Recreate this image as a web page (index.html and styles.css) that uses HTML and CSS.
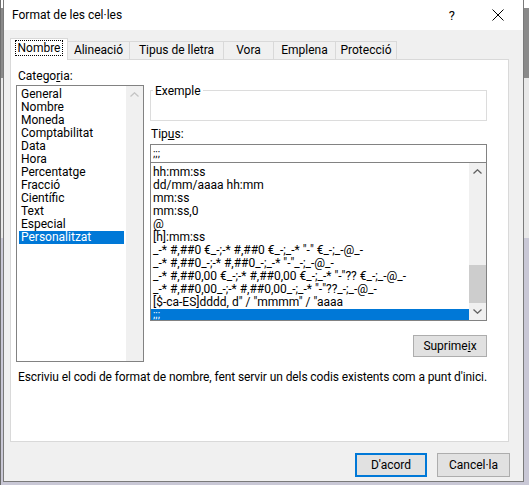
FILE: index.html
```html
<!DOCTYPE html>
<html lang="ca">
<head>
    <meta charset="UTF-8">
    <meta name="viewport" content="width=device-width, initial-scale=1.0">
    <title>Format de les cel·les</title>
    <link rel="stylesheet" href="styles.css">
</head>
<body>
    <div class="dialog">
        <div class="titlebar">
            <span class="title">Format de les cel·les</span>
            <span class="help">?</span>
            <svg class="close" width="12" height="12" viewBox="0 0 12 12">
                <path d="M0.5 0.5 L11.5 11.5 M11.5 0.5 L0.5 11.5" stroke="#000" stroke-width="1" fill="none"/>
            </svg>
        </div>

        <div class="tabs">
            <div class="tab active"><span class="focus">Nombre</span></div>
            <div class="tab">Alineació</div>
            <div class="tab">Tipus de lletra</div>
            <div class="tab">Vora</div>
            <div class="tab">Emplena</div>
            <div class="tab">Protecció</div>
        </div>

        <div class="panel">
            <div class="columns">
                <div class="left">
                    <div class="label">Catego<u>r</u>ia:</div>
                    <div class="listbox cats">
                        <ul>
                            <li>General</li>
                            <li>Nombre</li>
                            <li>Moneda</li>
                            <li>Comptabilitat</li>
                            <li>Data</li>
                            <li>Hora</li>
                            <li>Percentatge</li>
                            <li>Fracció</li>
                            <li>Científic</li>
                            <li>Text</li>
                            <li>Especial</li>
                            <li class="sel">Personalitzat</li>
                        </ul>
                        <div class="scrollbar">
                            <div class="sb-btn">
                                <svg width="9" height="5" viewBox="0 0 9 5"><path d="M0.5 4.5 L4.5 0.8 L8.5 4.5" stroke="#c4c4c4" stroke-width="1.3" fill="none"/></svg>
                            </div>
                        </div>
                    </div>
                </div>

                <div class="right">
                    <div class="sample">
                        <span class="legend">Exemple</span>
                    </div>

                    <div class="label type-label">Tip<u>u</u>s:</div>
                    <div class="typebox">;;;</div>
                    <div class="listbox codes">
                        <ul>
                            <li>hh:mm:ss</li>
                            <li>dd/mm/aaaa hh:mm</li>
                            <li>mm:ss</li>
                            <li>mm:ss,0</li>
                            <li>@</li>
                            <li>[h]:mm:ss</li>
                            <li>_-* #,##0 €_-;-* #,##0 €_-;_-* "-" €_-;_-@_-</li>
                            <li>_-* #,##0_-;-* #,##0_-;_-* "-"_-;_-@_-</li>
                            <li>_-* #,##0,00 €_-;-* #,##0,00 €_-;_-* "-"?? €_-;_-@_-</li>
                            <li>_-* #,##0,00_-;-* #,##0,00_-;_-* "-"??_-;_-@_-</li>
                            <li>[$-ca-ES]dddd, d" / "mmmm" / "aaaa</li>
                            <li class="sel">;;;</li>
                        </ul>
                        <div class="scrollbar">
                            <div class="sb-btn">
                                <svg width="9" height="5" viewBox="0 0 9 5"><path d="M0.5 4.5 L4.5 0.8 L8.5 4.5" stroke="#606060" stroke-width="1.3" fill="none"/></svg>
                            </div>
                            <div class="track"><div class="thumb"></div></div>
                            <div class="sb-btn">
                                <svg width="9" height="5" viewBox="0 0 9 5"><path d="M0.5 0.5 L4.5 4.2 L8.5 0.5" stroke="#606060" stroke-width="1.3" fill="none"/></svg>
                            </div>
                        </div>
                    </div>

                    <div class="delete-row">
                        <button class="btn">Suprime<u>i</u>x</button>
                    </div>
                </div>
            </div>

            <p class="hint">Escriviu el codi de format de nombre, fent servir un dels codis existents com a punt d'inici.</p>
        </div>

        <div class="actions">
            <button class="btn default">D'acord</button>
            <button class="btn">Cancel·la</button>
        </div>
    </div>
</body>
</html>
```

FILE: styles.css
```css
body {
    margin: 0;
    padding: 0;
    font-family: Roboto, "Noto Sans", sans-serif;
    font-size: 12px;
    color: #000;
    /* excel sheet peeking out behind the dialog */
    background:
        linear-gradient(to right, #6d6d6d 0, #6d6d6d 1px, transparent 1px),
        linear-gradient(to bottom, #ffffff 0, #ffffff 8px, #8a8a8a 8px, #8a8a8a 78px, #e8e8e8 78px, #e8e8e8 238px, #c9c8d6 238px);
    height: 485px;
    overflow: hidden;
}

.dialog {
    margin-left: 3px;
    width: 521px;
    height: 482px;
    box-sizing: border-box;
    border: 1px solid #7a7a7a;
    border-top: none;
    background-color: #f0f0f0;
}

.titlebar {
    height: 30px;
    background-color: #ffffff;
    display: flex;
    align-items: center;
    padding-left: 8px;
}
.title {
    flex: 1;
}
.help {
    font-size: 13px;
    margin-right: 37px;
}
.close {
    margin-right: 19px;
}

.tabs {
    display: flex;
    align-items: flex-end;
    margin-top: 8px;
    padding-left: 6px;
    height: 21px;
}
.tab {
    height: 18px;
    line-height: 17px;
    border: 1px solid #d9d9d9;
    border-bottom: none;
    margin-left: -1px;
    text-align: center;
    white-space: nowrap;
    box-sizing: border-box;
    background-color: #f0f0f0;
}
.tab:nth-child(2) { width: 63px; }
.tab:nth-child(3) { width: 95px; }
.tab:nth-child(4) { width: 51px; }
.tab:nth-child(5) { width: 63px; }
.tab:nth-child(6) { width: 62px; }
.tab.active {
    margin-left: 0;
    width: 58px;
    height: 22px;
    line-height: 18px;
    background-color: #ffffff;
    position: relative;
    z-index: 1;
    margin-bottom: -1px;
}
.focus {
    display: inline-block;
    border: 1px dotted #000;
    line-height: 14px;
    padding: 0 2px;
}

.panel {
    margin-left: 6px;
    width: 499px;
    height: 383px;
    box-sizing: border-box;
    background-color: #ffffff;
    border: 1px solid #d9d9d9;
    padding: 8px 0 0 6px;
}

.columns {
    display: flex;
    gap: 6px;
}
.left {
    width: 127px;
}
.right {
    width: 337px;
    padding-top: 22px;
}

.label {
    height: 17px;
    line-height: 17px;
    margin-left: 1px;
}

ul {
    list-style: none;
    margin: 0;
    padding: 0;
}

.listbox {
    display: flex;
    border: 1px solid #828282;
    background-color: #ffffff;
    box-sizing: border-box;
    overflow: hidden;
}
.listbox ul {
    flex: 1;
    min-width: 0;
    overflow: hidden;
}
.listbox li {
    height: 13px;
    line-height: 13px;
    white-space: nowrap;
    padding-left: 2px;
}
.listbox li.sel {
    background-color: #0078d7;
    color: #ffffff;
}

.cats {
    height: 277px;
    margin-left: -1px;
}
.cats ul {
    padding: 2px 0 0 2px;
}
.cats li.sel {
    margin-right: 2px;
}

.scrollbar {
    width: 17px;
    flex-shrink: 0;
    background-color: #f0f0f0;
    display: flex;
    flex-direction: column;
}
.sb-btn {
    height: 17px;
    display: flex;
    align-items: center;
    justify-content: center;
}
.track {
    flex: 1;
    display: flex;
    flex-direction: column;
    justify-content: flex-end;
}
.thumb {
    height: 38px;
    background-color: #cdcdcd;
}

.sample {
    height: 31px;
    box-sizing: border-box;
    border: 1px solid #dcdcdc;
}
/* caption sits on the top border, like a group box */
.legend {
    position: relative;
    top: -7px;
    margin-left: 2px;
    padding: 0 2px;
    background-color: #ffffff;
}

.type-label {
    margin-top: 5px;
    margin-bottom: 1px;
}

.typebox {
    height: 19px;
    line-height: 17px;
    box-sizing: border-box;
    border: 1px solid #828282;
    padding-left: 2px;
    font-size: 11px;
}

.codes {
    height: 159px;
    margin-top: -1px;
}
.codes ul {
    padding-top: 3px;
}
.codes li.sel {
    height: 11px;
    line-height: 11px;
    font-size: 11px;
}

.delete-row {
    display: flex;
    justify-content: flex-end;
    margin-top: 14px;
}

.btn {
    font-family: Roboto, "Noto Sans", sans-serif;
    font-size: 12px;
    color: #000;
    background-color: #e1e1e1;
    border: 1px solid #adadad;
    padding: 0;
    margin: 0;
    box-sizing: border-box;
}
.delete-row .btn {
    width: 74px;
    height: 22px;
}

.hint {
    margin: 8px 0 0 1px;
    line-height: 15px;
    letter-spacing: -0.1px;
    white-space: nowrap;
}

.actions {
    display: flex;
    justify-content: flex-end;
    gap: 10px;
    margin-top: 11px;
    padding-right: 13px;
}
.actions .btn {
    width: 73px;
    height: 24px;
}
.actions .btn.default {
    border: 2px solid #0078d7;
    width: 72px;
}
```
